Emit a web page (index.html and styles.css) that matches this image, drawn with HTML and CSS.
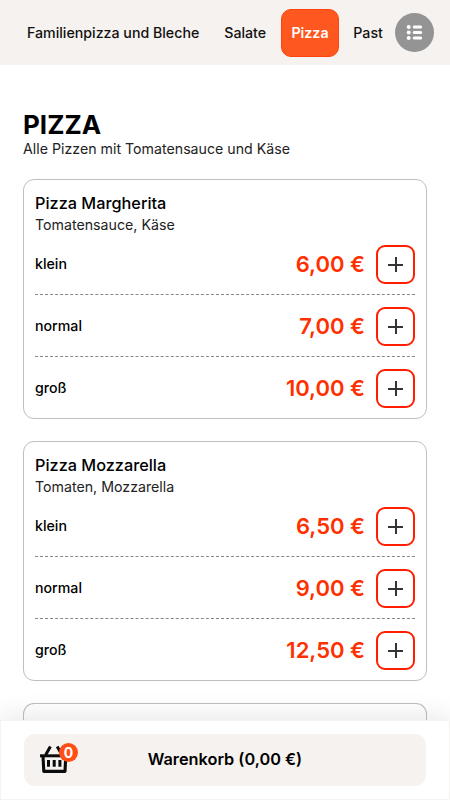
FILE: index.html
```html
<!DOCTYPE html>
<html lang="de">
<head>
    <meta charset="UTF-8">
    <meta name="viewport" content="width=device-width, initial-scale=1.0">
    <title>Pizza bestellen</title>
    <link rel="stylesheet" href="styles.css">
</head>
<body>

    <!-- Category navigation -->
    <header class="category-bar">
        <nav class="categories">
            <a class="category" href="#familie">Familienpizza und Bleche</a>
            <a class="category" href="#salate">Salate</a>
            <a class="category active" href="#pizza">Pizza</a>
            <a class="category" href="#pasta">Past</a>
        </nav>
        <button class="list-btn" aria-label="Alle Kategorien">
            <svg width="17" height="17" viewBox="0 0 17 17">
                <g fill="#fff">
                    <circle cx="2.7" cy="3" r="2"/>
                    <circle cx="2.7" cy="8.5" r="2"/>
                    <circle cx="2.7" cy="14" r="2"/>
                    <rect x="6.7" y="1.4" width="9.4" height="3.2" rx="1.5"/>
                    <rect x="6.7" y="6.9" width="9.4" height="3.2" rx="1.5"/>
                    <rect x="6.7" y="12.4" width="9.4" height="3.2" rx="1.5"/>
                </g>
            </svg>
        </button>
    </header>

    <!-- Menu -->
    <main class="menu" id="pizza">
        <h1>PIZZA</h1>
        <p class="menu-info">Alle Pizzen mit Tomatensauce und Käse</p>

        <div class="product-card">
            <h2>Pizza Margherita</h2>
            <p class="ingredients">Tomatensauce, Käse</p>
            <div class="size-row">
                <span class="size">klein</span>
                <span class="price">6,00 €</span>
                <button class="add-btn" aria-label="Hinzufügen"></button>
            </div>
            <div class="size-row">
                <span class="size">normal</span>
                <span class="price">7,00 €</span>
                <button class="add-btn" aria-label="Hinzufügen"></button>
            </div>
            <div class="size-row">
                <span class="size">groß</span>
                <span class="price">10,00 €</span>
                <button class="add-btn" aria-label="Hinzufügen"></button>
            </div>
        </div>

        <div class="product-card">
            <h2>Pizza Mozzarella</h2>
            <p class="ingredients">Tomaten, Mozzarella</p>
            <div class="size-row">
                <span class="size">klein</span>
                <span class="price">6,50 €</span>
                <button class="add-btn" aria-label="Hinzufügen"></button>
            </div>
            <div class="size-row">
                <span class="size">normal</span>
                <span class="price">9,00 €</span>
                <button class="add-btn" aria-label="Hinzufügen"></button>
            </div>
            <div class="size-row">
                <span class="size">groß</span>
                <span class="price">12,50 €</span>
                <button class="add-btn" aria-label="Hinzufügen"></button>
            </div>
        </div>

        <div class="product-card next-card"></div>
    </main>

    <!-- Cart bar -->
    <footer class="cart-bar">
        <button class="cart-btn">
            <span class="cart-icon">
                <svg width="30" height="30" viewBox="0 0 30 30" fill="none" stroke="#0b0b0b">
                    <path d="M1 10.8H28.5" stroke-width="3"/>
                    <path d="M4 11L4.8 26.4H26L26.8 11" stroke-width="3.1" stroke-linejoin="round"/>
                    <path d="M6.6 10L11.4 1.6M23 10L18.2 1.6" stroke-width="3"/>
                    <path d="M9.5 15V21.8M15.2 15V21.8M20.9 15V21.8" stroke-width="3"/>
                </svg>
                <span class="cart-count">0</span>
            </span>
            <span class="cart-label">Warenkorb (0,00 €)</span>
        </button>
    </footer>

</body>
</html>
```

FILE: styles.css
```css
/* Basic reset and page layout */
* {
    margin: 0;
    padding: 0;
    box-sizing: border-box;
}

body {
    font-family: Inter, "Liberation Sans", sans-serif;
    background-color: #fff;
    color: #000;
}

button {
    font-family: inherit;
    border: none;
    cursor: pointer;
}

/* Category navigation */
.category-bar {
    display: flex;
    align-items: center;
    height: 65px;
    padding-right: 16px;
    background-color: #f6f2ef;
}

.categories {
    display: flex;
    flex: 1;
    align-items: center;
    gap: 3px;
    padding-left: 16px;
    overflow: hidden;
}

.category {
    flex-shrink: 0;
    padding: 0 11px;
    height: 48px;
    line-height: 48px;
    border-radius: 10px;
    color: #111;
    font-size: 14.2px;
    font-weight: 500;
    text-decoration: none;
    white-space: nowrap;
}

.category.active {
    margin-left: 0.5px;
    background-color: #ff5720;
    border: 1px solid #ff430c;
    line-height: 46px;
    padding: 0 9.8px;
    color: #fff;
    font-weight: 600;
}

.list-btn {
    display: flex;
    align-items: center;
    justify-content: center;
    width: 39px;
    height: 39px;
    border-radius: 50%;
    background-color: #949494;
}

/* Menu */
.menu {
    padding: 44px 23px 0;
}

.menu h1 {
    font-size: 26px;
    line-height: 32px;
    font-weight: 700;
}

.menu-info {
    margin-bottom: 23px;
    font-size: 14.2px;
    line-height: 15px;
    color: #222;
}

/* Product cards */
.product-card {
    height: 240px;
    margin-bottom: 22px;
    padding: 12px 11px 0;
    border: 1px solid #bfbfbf;
    border-radius: 11px;
}

/* Runs on underneath the cart bar */
.product-card.next-card {
    height: 90px;
    margin-bottom: 0;
    border-bottom: none;
    border-radius: 11px 11px 0 0;
}

.product-card h2 {
    font-size: 16.3px;
    line-height: 22px;
    font-weight: 500;
}

.ingredients {
    margin-bottom: 9px;
    font-size: 14.2px;
    line-height: 22px;
    color: #222;
}

.size-row {
    display: flex;
    align-items: center;
    padding-bottom: 10px;
    margin-bottom: 12px;
    border-bottom: 1px dashed #888;
}

.size-row:last-child {
    border-bottom: none;
}

.size {
    flex: 1;
    padding-bottom: 2px;
    font-size: 14.2px;
    font-weight: 500;
}

.price {
    margin-right: 11px;
    padding-bottom: 2px;
    color: #ff3000;
    font-size: 22px;
    font-weight: 600;
}

.add-btn {
    width: 39px;
    height: 39px;
    border: 2px solid #ff1e00;
    border-radius: 9px;
    /* plus sign */
    background:
        linear-gradient(#333, #333) center / 15px 2px no-repeat,
        linear-gradient(#333, #333) center / 2px 15px no-repeat,
        #fff;
}

/* Cart bar */
.cart-bar {
    position: fixed;
    left: 0;
    right: 0;
    bottom: 0;
    height: 80px;
    padding: 13px 23px;
    background-color: #fff;
    border: 1px solid #f6f2ef;
    box-shadow: 0 0 30px rgba(0, 0, 0, 0.12);
}

.cart-btn {
    display: flex;
    align-items: center;
    justify-content: center;
    position: relative;
    width: 100%;
    height: 52px;
    border-radius: 11px;
    background-color: #f6f2ef;
    color: #000;
    font-size: 16.3px;
    font-weight: 600;
}

.cart-label {
    padding-bottom: 2px;
}

.cart-icon {
    position: absolute;
    left: 15px;
    top: 11px;
    width: 30px;
    height: 30px;
}

.cart-count {
    position: absolute;
    top: -2px;
    left: 20px;
    width: 19px;
    height: 19px;
    border-radius: 50%;
    background-color: #ff4e17;
    color: #fff;
    font-size: 14px;
    font-weight: 700;
    line-height: 19px;
    text-align: center;
}
```
